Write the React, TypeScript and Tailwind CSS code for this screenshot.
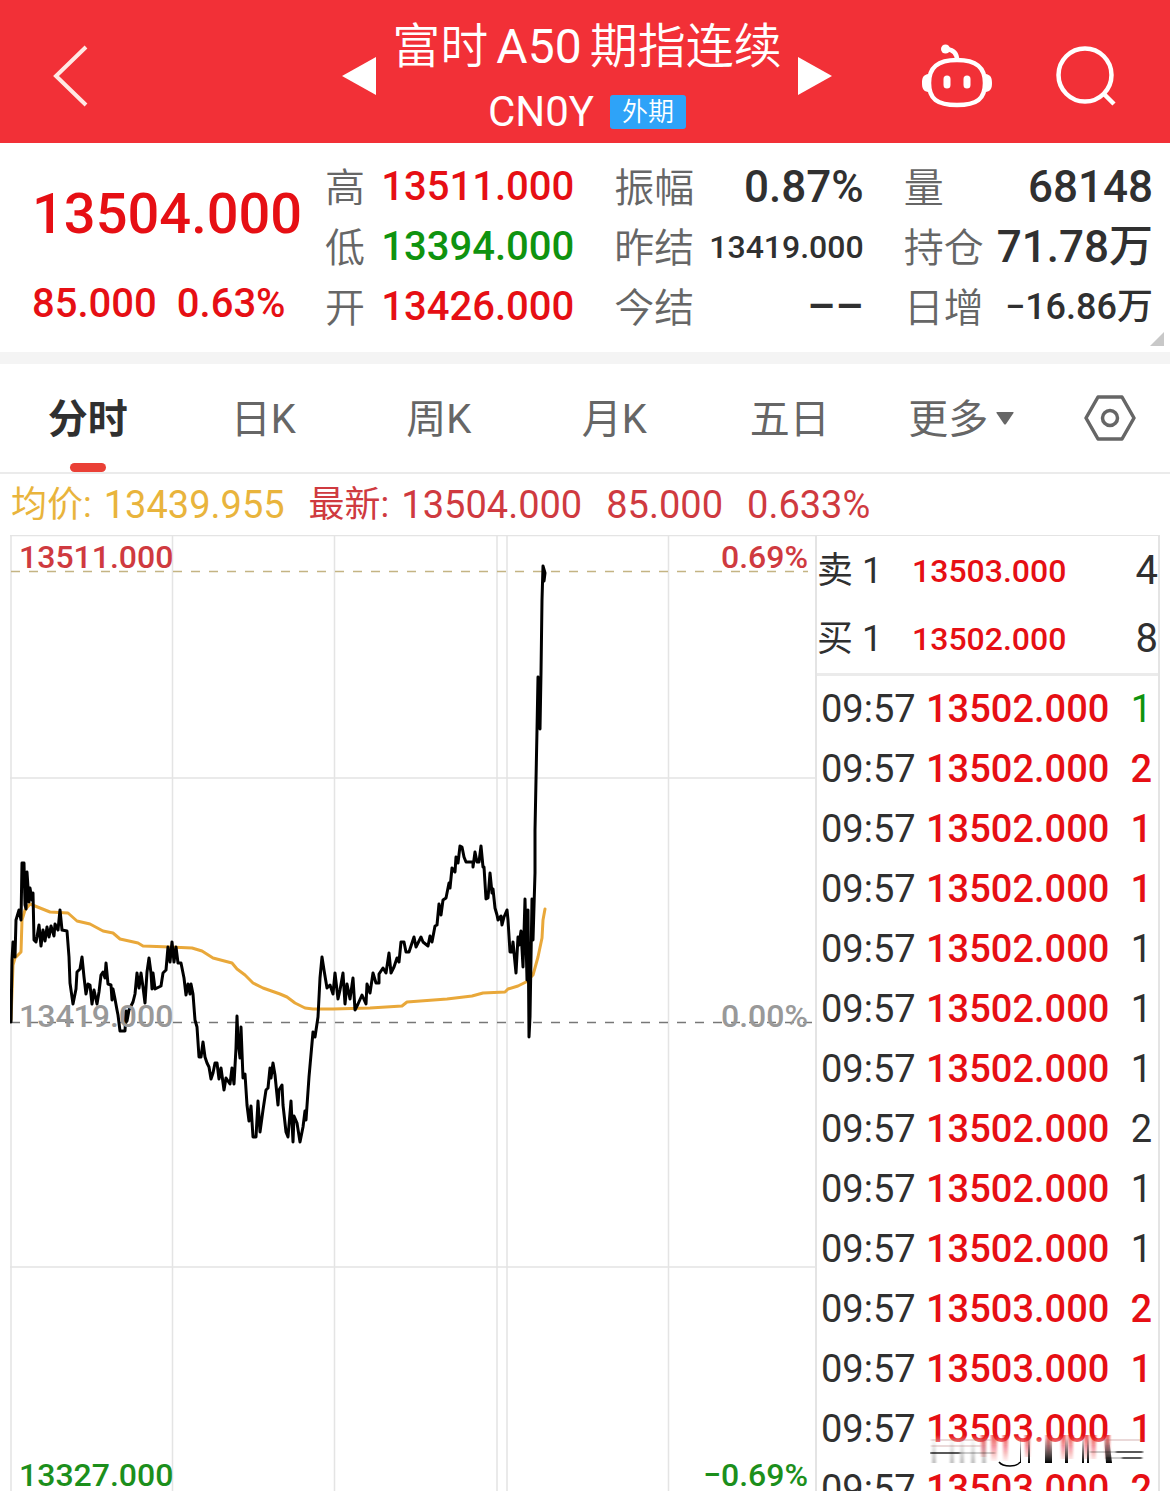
import clsx from 'clsx'

type Tone = 'up' | 'down' | 'flat'

interface Stat {
  label: string
  value: string
  tone: Tone
  size: string
}

interface Tick {
  time: string
  price: string
  volume: number
  tone: Tone
}

const TONE: Record<Tone, string> = {
  up: 'text-[#e60f14]',
  down: 'text-[#0f930f]',
  flat: 'text-[#303030]',
}

const STATS: Stat[][] = [
  [
    { label: '高', value: '13511.000', tone: 'up', size: 'text-[40px]' },
    { label: '低', value: '13394.000', tone: 'down', size: 'text-[40px]' },
    { label: '开', value: '13426.000', tone: 'up', size: 'text-[40px]' },
  ],
  [
    { label: '振幅', value: '0.87%', tone: 'flat', size: 'text-[44px]' },
    { label: '昨结', value: '13419.000', tone: 'flat', size: 'text-[32px]' },
    { label: '今结', value: '––', tone: 'flat', size: 'text-[44px]' },
  ],
  [
    { label: '量', value: '68148', tone: 'flat', size: 'text-[44px]' },
    { label: '持仓', value: '71.78万', tone: 'flat', size: 'text-[44px]' },
    { label: '日增', value: '−16.86万', tone: 'flat', size: 'text-[36px]' },
  ],
]

const TABS = ['分时', '日K', '周K', '月K', '五日']

const QUOTES = [
  { side: '卖', price: '13503.000', volume: 4 },
  { side: '买', price: '13502.000', volume: 8 },
]

const TICKS: Tick[] = [
  { time: '09:57', price: '13502.000', volume: 1, tone: 'down' },
  { time: '09:57', price: '13502.000', volume: 2, tone: 'up' },
  { time: '09:57', price: '13502.000', volume: 1, tone: 'up' },
  { time: '09:57', price: '13502.000', volume: 1, tone: 'up' },
  { time: '09:57', price: '13502.000', volume: 1, tone: 'flat' },
  { time: '09:57', price: '13502.000', volume: 1, tone: 'flat' },
  { time: '09:57', price: '13502.000', volume: 1, tone: 'flat' },
  { time: '09:57', price: '13502.000', volume: 2, tone: 'flat' },
  { time: '09:57', price: '13502.000', volume: 1, tone: 'flat' },
  { time: '09:57', price: '13502.000', volume: 1, tone: 'flat' },
  { time: '09:57', price: '13503.000', volume: 2, tone: 'up' },
  { time: '09:57', price: '13503.000', volume: 1, tone: 'up' },
  { time: '09:57', price: '13503.000', volume: 1, tone: 'up' },
  { time: '09:57', price: '13503.000', volume: 2, tone: 'up' },
]

const PRICE_LINE =
  '11,1022 12,960 13,942 15,957 16,920 19,910 21,920 22,863 24,863 25,905 26,909 27,872 29,902 30,888 32,900 33,893 34,940 36,942 37,937 39,925 41,946 43,930 45,941 47,927 49,937 51,926 54,936 55,924 58,930 60,910 62,930 67,931 69,957 70,983 73,1004 76,989 77,972 80,969 82,957 84,977 86,994 88,984 90,985 92,1004 94,990 97,1004 99,992 101,975 103,972 105,978 106,963 108,984 111,985 112,1000 113,989 115,999 117,1010 118,1015 120,1031 125,1031 126,1011 127,1021 129,1010 133,1002 135,994 137,973 139,988 141,973 143,987 145,1003 147,972 149,958 151,973 152,989 153,973 155,989 161,986 163,973 166,970 168,947 170,962 172,942 174,962 176,947 178,963 181,963 184,978 186,995 188,984 190,994 191,984 193,994 195,1020 197,1027 199,1057 201,1057 203,1042 205,1057 207,1063 209,1067 211,1079 213,1073 215,1063 217,1063 219,1079 221,1068 224,1090 226,1078 230,1084 232,1068 234,1084 236,1048 237,1016 238,1040 240,1058 241,1027 243,1078 245,1074 247,1105 249,1121 251,1106 253,1137 256,1137 258,1101 260,1132 263,1110 266,1090 268,1088 270,1068 271,1078 273,1063 275,1075 278,1105 279,1090 282,1085 283,1105 286,1132 288,1137 291,1101 293,1142 294,1116 297,1123 300,1142 303,1127 305,1111 306,1120 309,1077 313,1032 315,1037 318,1017 320,978 322,957 324,970 327,988 330,985 333,994 335,973 338,999 340,990 343,973 345,1004 347,984 350,999 353,978 355,1010 358,1004 362,995 366,1004 367,984 370,993 373,973 376,983 379,983 379,974 383,968 386,973 389,953 391,973 394,967 397,958 399,962 401,942 404,942 406,952 409,952 411,946 414,937 416,947 421,937 423,942 428,946 430,936 432,942 435,926 437,925 439,904 441,915 443,900 446,898 449,883 450,888 452,868 455,872 456,857 458,863 460,846 462,847 464,857 466,862 473,862 473,867 475,852 477,862 479,862 481,846 483,867 484,867 486,899 488,898 490,873 492,893 493,889 495,908 497,915 498,920 501,916 502,925 504,917 507,910 508,920 510,952 512,952 513,942 516,973 518,937 519,945 521,931 523,967 525,899 527,980 528,910 529,1037 530,1017 532,899 533,940 535,873 535,830 537,730 538,677 540,729 541,673 542,600 543,566 545,573 544,581'

const AVERAGE_LINE =
  '11,1020 13,965 15,958 21,952 22,920 25,910 30,904 35,906 50,912 68,913 77,921 90,924 103,931 113,933 120,939 138,943 143,946 170,947 192,948 202,951 213,958 232,963 237,969 245,975 253,983 263,988 280,994 287,997 295,1003 305,1008 313,1009 333,1009 370,1008 402,1006 407,1002 447,999 472,996 483,993 505,992 508,989 518,986 526,982 533,975 538,957 542,938 543,920 545,909'

export default function App() {
  return (
    <div className="flex h-screen flex-col overflow-hidden bg-white font-['Roboto','Noto_Sans_CJK_SC',sans-serif] text-[#303030]">
      <TopBar />
      <Summary />
      <Tabs />
      <div className="flex h-[61px] shrink-0 items-center gap-6 px-[11px] text-[38px] leading-none whitespace-nowrap">
        <p className="flex items-center gap-3 text-[#e9b43c]">
          <span className="text-[36px]">均价:</span>13439.955
        </p>
        <p className="flex items-center gap-3 text-[#cf3a40]">
          <span className="text-[36px]">最新:</span>13504.000
        </p>
        <p className="text-[#cf3a40]">85.000</p>
        <p className="text-[#cf3a40]">0.633%</p>
      </div>
      <main className="flex shrink-0 px-[10px]">
        <Chart />
        <OrderPanel />
      </main>
    </div>
  )
}

function TopBar() {
  return (
    <header className="grid h-[143px] shrink-0 grid-cols-[1fr_auto_1fr] items-center bg-[#f23037] text-white">
      <button aria-label="返回" className="mt-2 ml-[52px] w-9">
        <svg viewBox="0 0 36 62" className="h-[62px] w-9" fill="none" stroke="#ffe9e4" strokeWidth="4">
          <path d="M34 2 4 31 34 60" />
        </svg>
      </button>
      <div className="flex items-center gap-4 pl-1">
        <button aria-label="上一个" className="mt-2">
          <svg viewBox="0 0 34 38" className="h-[38px] w-[34px]" fill="currentColor">
            <path d="M34 0v38L0 19Z" />
          </svg>
        </button>
        <div className="flex flex-col items-center gap-[14px] pt-2">
          <h1 className="flex items-center gap-2 text-[48px] leading-[58px] font-[350] whitespace-nowrap">
            <span>富时</span>
            <span className="font-normal">A50</span>
            <span>期指连续</span>
          </h1>
          <div className="flex items-center gap-4">
            <span className="text-[42px] leading-[44px]">CN0Y</span>
            <span className="rounded-[3px] bg-[#2ea3f8] px-3 text-[26px] leading-[34px] font-[350]">外期</span>
          </div>
        </div>
        <button aria-label="下一个" className="mt-2">
          <svg viewBox="0 0 34 38" className="h-[38px] w-[34px]" fill="currentColor">
            <path d="M0 0v38l34-19Z" />
          </svg>
        </button>
      </div>
      <div className="mt-2 flex items-center justify-end gap-16 pr-[54px]">
        <button aria-label="智能助手">
          <RobotIcon />
        </button>
        <button aria-label="搜索">
          <svg viewBox="0 0 60 60" className="size-[60px]" fill="none" stroke="currentColor" strokeWidth="4.5">
            <circle cx="29" cy="29" r="26.500" />
            <path d="m48 48 10 10" />
          </svg>
        </button>
      </div>
    </header>
  )
}

function RobotIcon() {
  return (
    <svg viewBox="0 0 70 64" className="h-16 w-[70px]" fill="none" stroke="currentColor" strokeWidth="4.5">
      <path d="M35 16c20 0 28 8 28 23 0 16-8 22-28 22S7 55 7 39c0-15 8-23 28-23Z" />
      <path d="M35 16c0-7-4-10-10-11" />
      <circle cx="23.500" cy="5" r="4.500" fill="currentColor" stroke="none" />
      <path d="M6 30c-5 1-6 4-6 9s1 8 6 9ZM64 30c5 1 6 4 6 9s-1 8-6 9Z" fill="currentColor" stroke="none" />
      <path d="M25 35v6M45 35v6" strokeWidth="7" strokeLinecap="round" />
    </svg>
  )
}

function Summary() {
  return (
    <section className="relative flex h-[221px] shrink-0 border-b-12 border-[#f4f4f4] pt-[14px] pr-[17px] font-medium">
      <div className="flex w-[325px] flex-col pl-8 text-[#e60f14]">
        <div className="flex h-[114px] items-center text-[56px] leading-none">13504.000</div>
        <div className="flex h-[66px] items-center gap-5 text-[40px] leading-none">
          <span>85.000</span>
          <span>0.63%</span>
        </div>
      </div>
      <div className="grid flex-1 grid-cols-3 gap-x-10">
        {STATS.map((group, i) => (
          <dl key={i}>
            {group.map((s) => (
              <div key={s.label} className="flex h-[60px] items-center justify-between whitespace-nowrap">
                <dt className="pt-1 text-[40px] leading-none font-[350] text-[#666]">{s.label}</dt>
                <dd className={clsx('leading-none', s.size, TONE[s.tone])}>{s.value}</dd>
              </div>
            ))}
          </dl>
        ))}
      </div>
      {/* Expand corner */}
      <svg viewBox="0 0 14 14" className="absolute right-[6px] bottom-[6px] size-[14px]" fill="#c8c8c8">
        <path d="M14 0v14H0Z" />
      </svg>
    </section>
  )
}

function Tabs() {
  return (
    <nav className="grid h-[110px] shrink-0 grid-cols-[repeat(6,3fr)_2fr] border-b-2 border-[#ebebeb] text-[40px] leading-none text-[#666]">
      {TABS.map((tab, i) => (
        <button
          key={tab}
          className={clsx('relative flex items-center justify-center pt-1', i === 0 && 'font-bold text-[#303030]')}
        >
          {tab}
          {i === 0 && <span className="absolute bottom-0 h-[9px] w-9 rounded-full bg-[#ea4036]" />}
        </button>
      ))}
      <button className="flex items-center justify-center gap-2 pt-1 pr-2">
        更多
        <svg viewBox="0 0 18 13" className="mb-1 h-[13px] w-[18px]" fill="currentColor">
          <path d="M1 0h16q1 0 .5 1L10 12q-1 1-2 0L.5 1Q0 0 1 0Z" />
        </svg>
      </button>
      <button aria-label="设置" className="flex items-center justify-center pr-1">
        <svg viewBox="0 0 52 46" className="h-[46px] w-[52px]" fill="none" stroke="currentColor" strokeWidth="3.5">
          <path d="M14 2h24l12 21-12 21H14L2 23Z" strokeLinejoin="round" />
          <circle cx="26" cy="23" r="7.500" />
        </svg>
      </button>
    </nav>
  )
}

function Chart() {
  return (
    <div className="relative h-[976px] flex-1 text-[32px] leading-none font-medium">
      <svg viewBox="10 535 805 976" preserveAspectRatio="none" className="size-full" fill="none">
        <g stroke="#e4e4e4" strokeWidth="1.5">
          <path d="M11 535V1511M172.500 535V1511M334.500 535V1511M497 535V1511M507 535V1511M668.500 535V1511" />
          <path d="M10 535.500H815M10 778H815M10 1267H815" />
        </g>
        <path d="M11 571.500H808" stroke="#c4b483" strokeWidth="1.5" strokeDasharray="9 9" />
        <path d="M11 1022.500H812" stroke="#777" strokeWidth="1.500" strokeDasharray="9 9" />
        <polyline points={AVERAGE_LINE} stroke="#e9a83a" strokeWidth="3" strokeLinejoin="round" strokeLinecap="round" />
        <polyline points={PRICE_LINE} stroke="#000" strokeWidth="3" strokeLinejoin="round" strokeLinecap="round" />
      </svg>
      <div className="absolute inset-0 flex flex-col justify-between pt-[6px] pr-[7px] pb-5 pl-[9px]">
        <div className="flex justify-between text-[#cf3a40]">
          <span>13511.000</span>
          <span>0.69%</span>
        </div>
        <div className="flex justify-between text-[#999]">
          <span>13419.000</span>
          <span>0.00%</span>
        </div>
        <div className="flex justify-between text-[#1c8f1c]">
          <span>13327.000</span>
          <span>−0.69%</span>
        </div>
      </div>
    </div>
  )
}

function OrderPanel() {
  return (
    <aside className="relative w-[345px] border-x-2 border-t border-[#e4e4e4] leading-none">
      <table className="w-full border-b-3 border-[#ebebeb]">
        <tbody>
          {QUOTES.map((q) => (
            <tr key={q.side} className="h-[69px]">
              <th scope="row" className="w-[95px] text-left text-[36px] font-normal">
                {q.side} 1
              </th>
              <td className={clsx('text-[32px] font-medium', TONE.up)}>{q.price}</td>
              <td className="text-right text-[40px]">{q.volume}</td>
            </tr>
          ))}
        </tbody>
      </table>
      <table className="mt-[3px] w-full text-[38px]">
        <tbody>
          {TICKS.map((t, i) => (
            <tr key={i} className="h-[60px]">
              <td className="w-[109px] pl-1">{t.time}</td>
              <td className={clsx('font-medium', TONE.up)}>{t.price}</td>
              <td className={clsx('pr-[6px] text-right', TONE[t.tone], t.tone === 'up' && 'font-medium')}>{t.volume}</td>
            </tr>
          ))}
        </tbody>
      </table>
      <Smudge />
    </aside>
  )
}

// Streaks that fade out the lower half of the last full row
function Smudge() {
  return (
    <svg viewBox="0 0 214 34" className="absolute top-[899px] left-[113px] h-[34px] w-[214px]" fill="none">
      <defs>
        <linearGradient id="veil" x1="0" y1="0" x2="0" y2="1">
          <stop offset="0" stopColor="#fff" stopOpacity="0" />
          <stop offset="0.5" stopColor="#fff" stopOpacity="0.9" />
          <stop offset="1" stopColor="#fff" />
        </linearGradient>
        <linearGradient id="red" x1="0" y1="0" x2="0" y2="28" gradientUnits="userSpaceOnUse">
          <stop offset="0" stopColor="#e60f14" stopOpacity="0.7" />
          <stop offset="1" stopColor="#e60f14" stopOpacity="0" />
        </linearGradient>
        <linearGradient id="streak" x1="0" y1="0" x2="0" y2="28" gradientUnits="userSpaceOnUse">
          <stop offset="0.1" stopColor="#000" stopOpacity="0" />
          <stop offset="1" stopColor="#000" />
        </linearGradient>
        <filter id="soft" x="-5%" y="-20%" width="110%" height="140%">
          <feGaussianBlur stdDeviation="1 0.3" />
        </filter>
      </defs>
      <path d="M0 0h202v32H0Z" fill="url(#veil)" />
      <g fill="url(#red)" filter="url(#soft)">
        <path d="M51 0h5v22h-5ZM61 0h6v26h-6ZM73 0h5v26h-5ZM95 0h5v22h-5ZM116 0h5v24h-5ZM131 0h5v24h-5ZM138 0h5v24h-5ZM154 0h5v24h-5ZM161 0h5v24h-5ZM175 0h5v24h-5Z" />
      </g>
      <g fill="url(#streak)">
        <path opacity=".25" filter="url(#soft)" d="M2 4h4v24H2ZM20 4h4v24h-4ZM30 4h4v24h-4ZM41 4h4v24h-4ZM52 4h4v24h-4Z" />
        <path d="M90 2h1v26h-1ZM98 2h2v26h-2ZM115 2h7v26h-7ZM135 2h3v26h-3ZM152 2h2v26h-2ZM157 2h2v26h-2ZM174 2h5l3 26h-6Z" />
      </g>
      <path d="M69 27q3 4 11 4t10-4" stroke="#000" strokeWidth="1.5" />
      <g filter="url(#soft)" strokeWidth="2">
        <path d="M1 5h60M1 11h50M170 5h42" stroke="#a66" strokeOpacity=".25" />
        <path d="M0 18h30M186 17h27M192 23h20" stroke="#000" strokeOpacity=".65" />
        <path d="M30 18h35M160 17h26M176 23h16" stroke="#000" strokeOpacity=".2" />
      </g>
    </svg>
  )
}
